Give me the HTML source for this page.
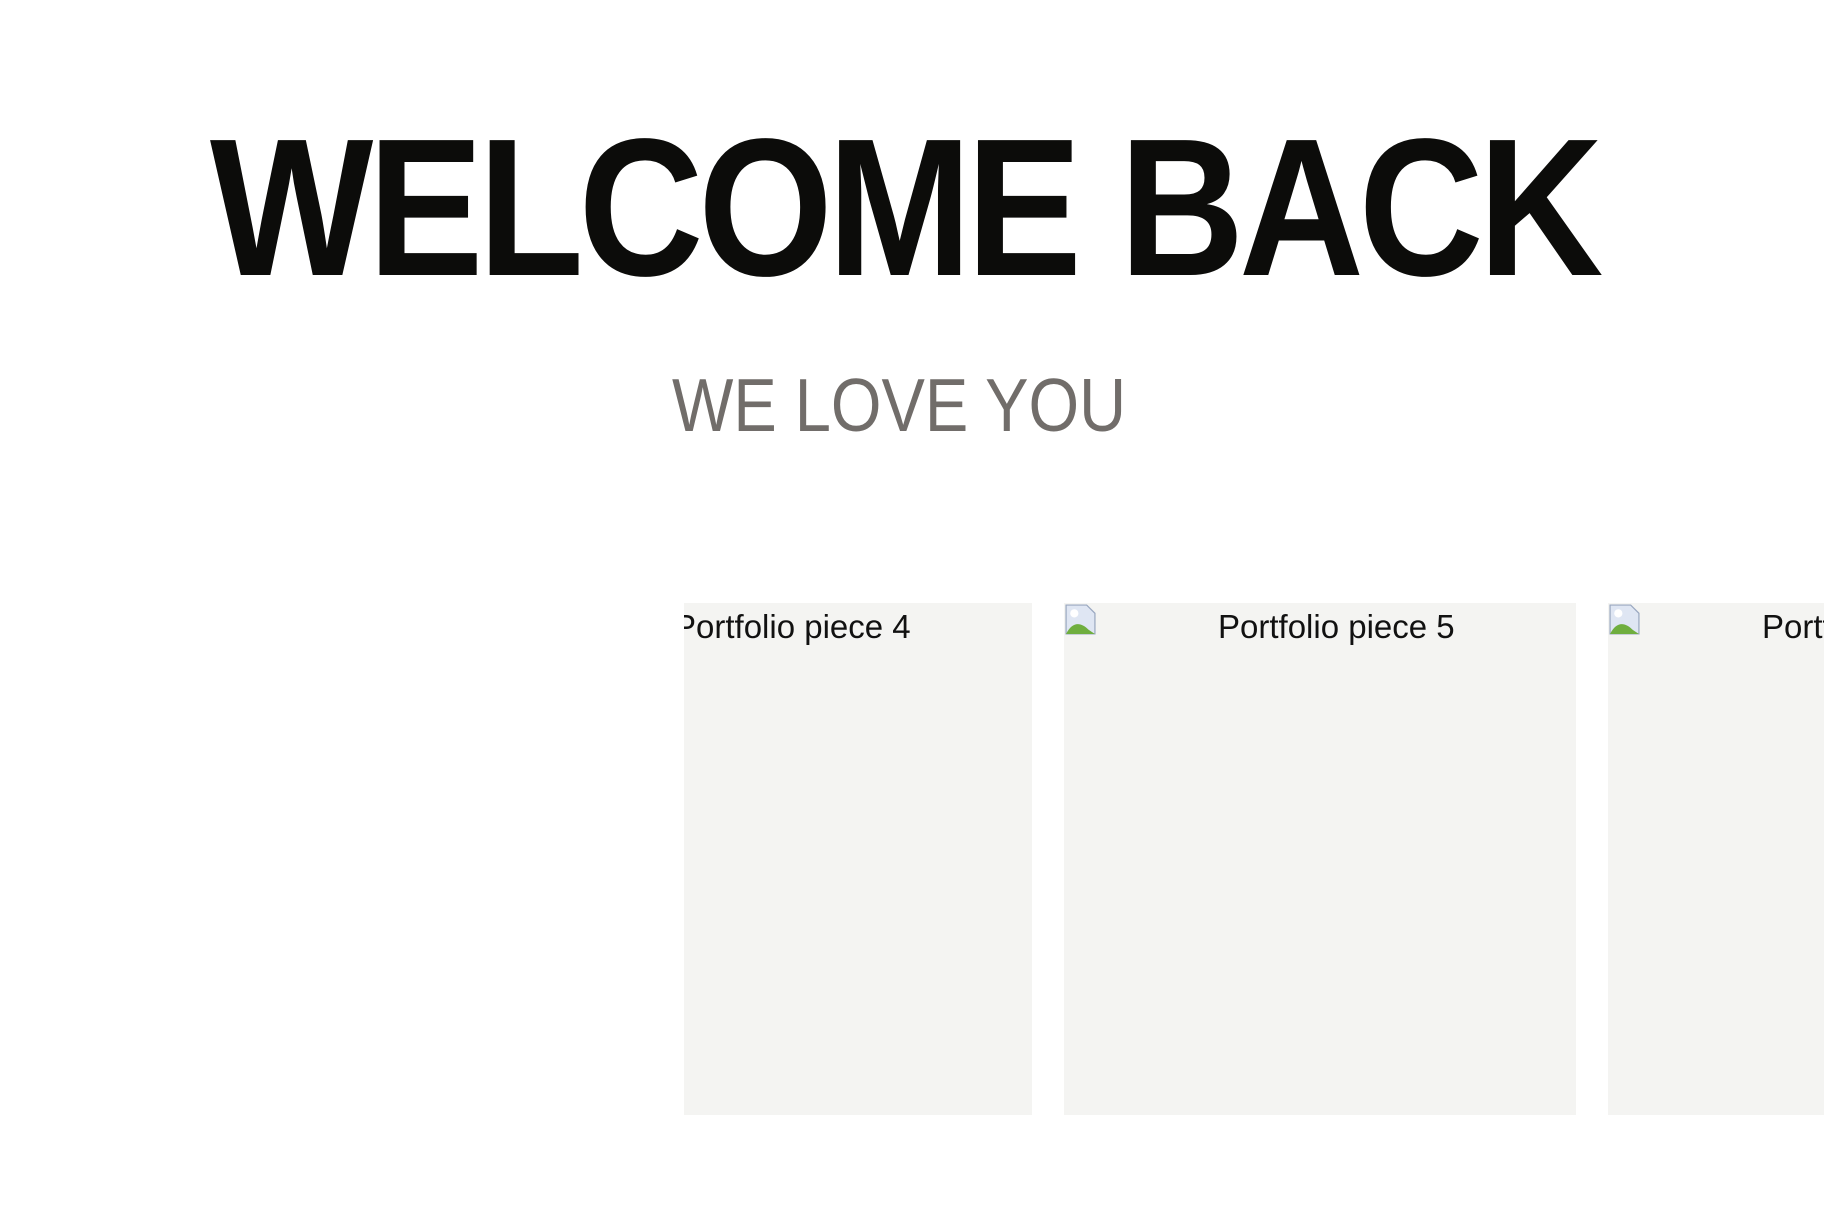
<!DOCTYPE html>
<html><head><meta charset="utf-8"><style>
html,body{margin:0;padding:0;background:#fff;width:1824px;height:1230px;overflow:hidden;font-family:"Liberation Sans",sans-serif;}
h1{position:absolute;left:-8px;width:1824px;top:108px;margin:0;text-align:center;font-size:196px;font-weight:bold;letter-spacing:-6px;color:#0c0c0a;line-height:200px;transform:scaleX(0.883);transform-origin:912px 0}
h2{position:absolute;left:-13px;width:1824px;top:360px;margin:0;text-align:center;font-size:75px;font-weight:normal;letter-spacing:0;color:#716d6a;line-height:90px;transform:scaleX(0.867);transform-origin:912px 0}
.clip{position:absolute;left:684px;top:603px;width:1140px;height:512px;overflow:hidden}
.card{position:absolute;top:0;width:512px;height:512px;background:#f4f4f2;font-size:33px;color:#111}
.card span{position:absolute;left:154px;top:4px;line-height:40px;white-space:nowrap}
.card svg{position:absolute;left:0;top:0}
</style></head><body>
<h1>WELCOME BACK</h1>
<h2>WE LOVE YOU</h2>
<div class="clip">
 <div class="card" style="left:-164px"><span>Portfolio piece 4</span></div>
 <div class="card" style="left:380px"><svg width="33" height="33" viewBox="0 0 16 16"><path d="M1 1h10l4 4v10H1z" fill="#dfe6f3" stroke="#9aa8c0" stroke-width=".6"/><path d="M1 15 C4 9 8 9 12 13 L15 15z" fill="#6fae3f"/><circle cx="5" cy="5" r="2" fill="#fff"/></svg><span>Portfolio piece 5</span></div>
 <div class="card" style="left:924px"><svg width="33" height="33" viewBox="0 0 16 16"><path d="M1 1h10l4 4v10H1z" fill="#dfe6f3" stroke="#9aa8c0" stroke-width=".6"/><path d="M1 15 C4 9 8 9 12 13 L15 15z" fill="#6fae3f"/><circle cx="5" cy="5" r="2" fill="#fff"/></svg><span>Portfolio piece 6</span></div>
</div>
</body></html>
